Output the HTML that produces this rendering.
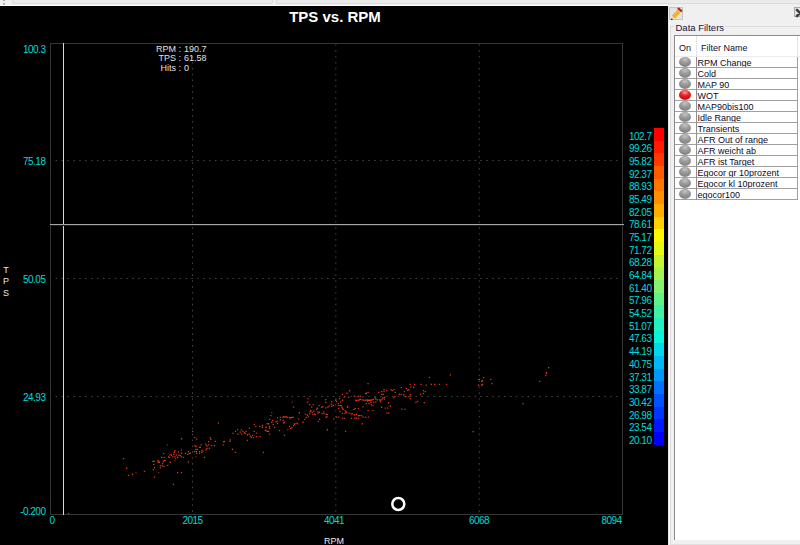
<!DOCTYPE html>
<html><head><meta charset="utf-8">
<style>
html,body{margin:0;padding:0;}
body{width:800px;height:545px;overflow:hidden;position:relative;background:#f0f0f0;font-family:"Liberation Sans",sans-serif;}
#top{position:absolute;left:0;top:0;width:800px;height:6px;background:#efefef;}
#top .ln{position:absolute;left:0;top:5px;width:668px;height:1px;background:#ffffff;}
#top .bx{position:absolute;top:-6px;height:8px;border:1px solid #dcdcdc;border-radius:2px;background:#ebebeb;}
#chart{position:absolute;left:0;top:6px;width:668px;height:539px;background:#000;}
.cy{position:absolute;font-size:10px;letter-spacing:-0.5px;line-height:12px;color:#00dada;white-space:nowrap;}
.cx{position:absolute;width:60px;text-align:center;font-size:10px;letter-spacing:-0.5px;line-height:12px;color:#00dada;white-space:nowrap;}
.title{position:absolute;left:235px;top:7.5px;width:200px;text-align:center;font-weight:bold;font-size:15px;line-height:18px;color:#fff;}
.info{position:absolute;font-size:9px;line-height:9.4px;color:#e0e0e0;white-space:nowrap;}
.axl{position:absolute;font-size:9px;color:#e8e8e8;white-space:nowrap;line-height:11px;}
#panel{position:absolute;left:668px;top:6px;width:132px;height:539px;background:#f0f0f0;}
.pencil{position:absolute;left:669px;top:7px;width:14px;height:13px;border:1px solid #c4c4c4;background:#e2e2e2;box-sizing:border-box;}
.closeb{position:absolute;left:794px;top:7px;width:12px;height:10px;border:1px solid #a8a8a8;background:#e8e8e8;box-sizing:border-box;}
.gb{position:absolute;left:670px;top:26px;width:140px;height:517px;border-left:1px solid #dcdcdc;border-top:1px solid #dcdcdc;border-bottom:1px solid #e0e0e0;}
.hl{position:absolute;left:668px;top:6px;width:1px;height:539px;background:#e8e8e8;}
.hl2{position:absolute;left:669px;top:20px;width:1px;height:525px;background:#fafafa;}
.gbt{position:absolute;left:674px;top:20.5px;padding:0 1px 0 1.5px;background:#f0f0f0;font-size:9.5px;line-height:13px;color:#141440;white-space:nowrap;}
#tbl{position:absolute;left:674px;top:35px;width:126px;height:505px;background:#fff;border-left:1px solid #8a8a8a;border-top:1px solid #8a8a8a;box-sizing:border-box;}
.hdr{position:absolute;font-size:9px;line-height:12px;color:#101030;white-space:nowrap;}
.hdiv{position:absolute;left:696px;top:36px;width:1px;height:20px;background:#e4e4e4;}
.rl{position:absolute;left:675px;width:123px;height:1px;background:#a0a0a0;}
.rt{position:absolute;left:697.5px;font-size:9px;line-height:11px;color:#0a0a28;white-space:nowrap;}
.ball{position:absolute;left:679px;width:12px;height:10px;border-radius:6px/5px;background:radial-gradient(ellipse 70% 60% at 50% 25%,#c4c4c4 0%,#9a9a9a 55%,#888 100%);}
.ball.red{background:radial-gradient(ellipse 70% 60% at 50% 25%,#ff9a9a 0%,#e62020 55%,#d01010 100%);}
.vdiv{position:absolute;left:696px;top:57px;width:1px;height:143px;background:#909090;}
.rdiv{position:absolute;left:797px;top:57px;width:1px;height:143px;background:#a0a0a0;}
.hbl{position:absolute;left:675px;top:56px;width:125px;height:1px;background:#ececec;}
</style></head><body>
<div id="top"><div style="position:absolute;left:3px;top:0;width:2px;height:1px;background:#a8a8a8"></div><div style="position:absolute;left:3px;top:3px;width:2px;height:2px;background:#b0b0b0"></div><div class="bx" style="left:12px;width:259px"></div><div class="bx" style="left:276px;width:540px"></div><div class="ln"></div></div>
<div id="chart"></div>
<svg width="800" height="545" viewBox="0 0 800 545" style="position:absolute;left:0;top:0">
<g shape-rendering="crispEdges" fill="#363636">
<rect x="50" y="43" width="573" height="1"/><rect x="50" y="514" width="573" height="1"/><rect x="50" y="43" width="1" height="472"/><rect x="622" y="43" width="1" height="472"/>
</g>
<path d="M192.00 44.20h1v1.6h-1zM192.00 50.10h1v1.6h-1zM192.00 56.00h1v1.6h-1zM192.00 61.90h1v1.6h-1zM192.00 67.80h1v1.6h-1zM192.00 73.70h1v1.6h-1zM192.00 79.60h1v1.6h-1zM192.00 85.50h1v1.6h-1zM192.00 91.40h1v1.6h-1zM192.00 97.30h1v1.6h-1zM192.00 103.20h1v1.6h-1zM192.00 109.10h1v1.6h-1zM192.00 115.00h1v1.6h-1zM192.00 120.90h1v1.6h-1zM192.00 126.80h1v1.6h-1zM192.00 132.70h1v1.6h-1zM192.00 138.60h1v1.6h-1zM192.00 144.50h1v1.6h-1zM192.00 150.40h1v1.6h-1zM192.00 156.30h1v1.6h-1zM192.00 162.20h1v1.6h-1zM192.00 168.10h1v1.6h-1zM192.00 174.00h1v1.6h-1zM192.00 179.90h1v1.6h-1zM192.00 185.80h1v1.6h-1zM192.00 191.70h1v1.6h-1zM192.00 197.60h1v1.6h-1zM192.00 203.50h1v1.6h-1zM192.00 209.40h1v1.6h-1zM192.00 215.30h1v1.6h-1zM192.00 221.20h1v1.6h-1zM192.00 227.10h1v1.6h-1zM192.00 233.00h1v1.6h-1zM192.00 238.90h1v1.6h-1zM192.00 244.80h1v1.6h-1zM192.00 250.70h1v1.6h-1zM192.00 256.60h1v1.6h-1zM192.00 262.50h1v1.6h-1zM192.00 268.40h1v1.6h-1zM192.00 274.30h1v1.6h-1zM192.00 280.20h1v1.6h-1zM192.00 286.10h1v1.6h-1zM192.00 292.00h1v1.6h-1zM192.00 297.90h1v1.6h-1zM192.00 303.80h1v1.6h-1zM192.00 309.70h1v1.6h-1zM192.00 315.60h1v1.6h-1zM192.00 321.50h1v1.6h-1zM192.00 327.40h1v1.6h-1zM192.00 333.30h1v1.6h-1zM192.00 339.20h1v1.6h-1zM192.00 345.10h1v1.6h-1zM192.00 351.00h1v1.6h-1zM192.00 356.90h1v1.6h-1zM192.00 362.80h1v1.6h-1zM192.00 368.70h1v1.6h-1zM192.00 374.60h1v1.6h-1zM192.00 380.50h1v1.6h-1zM192.00 386.40h1v1.6h-1zM192.00 392.30h1v1.6h-1zM192.00 398.20h1v1.6h-1zM192.00 404.10h1v1.6h-1zM192.00 410.00h1v1.6h-1zM192.00 415.90h1v1.6h-1zM192.00 421.80h1v1.6h-1zM192.00 427.70h1v1.6h-1zM192.00 433.60h1v1.6h-1zM192.00 439.50h1v1.6h-1zM192.00 445.40h1v1.6h-1zM192.00 451.30h1v1.6h-1zM192.00 457.20h1v1.6h-1zM192.00 463.10h1v1.6h-1zM192.00 469.00h1v1.6h-1zM192.00 474.90h1v1.6h-1zM192.00 480.80h1v1.6h-1zM192.00 486.70h1v1.6h-1zM192.00 492.60h1v1.6h-1zM192.00 498.50h1v1.6h-1zM192.00 504.40h1v1.6h-1zM192.00 510.30h1v1.6h-1zM335.30 44.20h1v1.6h-1zM335.30 50.10h1v1.6h-1zM335.30 56.00h1v1.6h-1zM335.30 61.90h1v1.6h-1zM335.30 67.80h1v1.6h-1zM335.30 73.70h1v1.6h-1zM335.30 79.60h1v1.6h-1zM335.30 85.50h1v1.6h-1zM335.30 91.40h1v1.6h-1zM335.30 97.30h1v1.6h-1zM335.30 103.20h1v1.6h-1zM335.30 109.10h1v1.6h-1zM335.30 115.00h1v1.6h-1zM335.30 120.90h1v1.6h-1zM335.30 126.80h1v1.6h-1zM335.30 132.70h1v1.6h-1zM335.30 138.60h1v1.6h-1zM335.30 144.50h1v1.6h-1zM335.30 150.40h1v1.6h-1zM335.30 156.30h1v1.6h-1zM335.30 162.20h1v1.6h-1zM335.30 168.10h1v1.6h-1zM335.30 174.00h1v1.6h-1zM335.30 179.90h1v1.6h-1zM335.30 185.80h1v1.6h-1zM335.30 191.70h1v1.6h-1zM335.30 197.60h1v1.6h-1zM335.30 203.50h1v1.6h-1zM335.30 209.40h1v1.6h-1zM335.30 215.30h1v1.6h-1zM335.30 221.20h1v1.6h-1zM335.30 227.10h1v1.6h-1zM335.30 233.00h1v1.6h-1zM335.30 238.90h1v1.6h-1zM335.30 244.80h1v1.6h-1zM335.30 250.70h1v1.6h-1zM335.30 256.60h1v1.6h-1zM335.30 262.50h1v1.6h-1zM335.30 268.40h1v1.6h-1zM335.30 274.30h1v1.6h-1zM335.30 280.20h1v1.6h-1zM335.30 286.10h1v1.6h-1zM335.30 292.00h1v1.6h-1zM335.30 297.90h1v1.6h-1zM335.30 303.80h1v1.6h-1zM335.30 309.70h1v1.6h-1zM335.30 315.60h1v1.6h-1zM335.30 321.50h1v1.6h-1zM335.30 327.40h1v1.6h-1zM335.30 333.30h1v1.6h-1zM335.30 339.20h1v1.6h-1zM335.30 345.10h1v1.6h-1zM335.30 351.00h1v1.6h-1zM335.30 356.90h1v1.6h-1zM335.30 362.80h1v1.6h-1zM335.30 368.70h1v1.6h-1zM335.30 374.60h1v1.6h-1zM335.30 380.50h1v1.6h-1zM335.30 386.40h1v1.6h-1zM335.30 392.30h1v1.6h-1zM335.30 398.20h1v1.6h-1zM335.30 404.10h1v1.6h-1zM335.30 410.00h1v1.6h-1zM335.30 415.90h1v1.6h-1zM335.30 421.80h1v1.6h-1zM335.30 427.70h1v1.6h-1zM335.30 433.60h1v1.6h-1zM335.30 439.50h1v1.6h-1zM335.30 445.40h1v1.6h-1zM335.30 451.30h1v1.6h-1zM335.30 457.20h1v1.6h-1zM335.30 463.10h1v1.6h-1zM335.30 469.00h1v1.6h-1zM335.30 474.90h1v1.6h-1zM335.30 480.80h1v1.6h-1zM335.30 486.70h1v1.6h-1zM335.30 492.60h1v1.6h-1zM335.30 498.50h1v1.6h-1zM335.30 504.40h1v1.6h-1zM335.30 510.30h1v1.6h-1zM478.80 44.20h1v1.6h-1zM478.80 50.10h1v1.6h-1zM478.80 56.00h1v1.6h-1zM478.80 61.90h1v1.6h-1zM478.80 67.80h1v1.6h-1zM478.80 73.70h1v1.6h-1zM478.80 79.60h1v1.6h-1zM478.80 85.50h1v1.6h-1zM478.80 91.40h1v1.6h-1zM478.80 97.30h1v1.6h-1zM478.80 103.20h1v1.6h-1zM478.80 109.10h1v1.6h-1zM478.80 115.00h1v1.6h-1zM478.80 120.90h1v1.6h-1zM478.80 126.80h1v1.6h-1zM478.80 132.70h1v1.6h-1zM478.80 138.60h1v1.6h-1zM478.80 144.50h1v1.6h-1zM478.80 150.40h1v1.6h-1zM478.80 156.30h1v1.6h-1zM478.80 162.20h1v1.6h-1zM478.80 168.10h1v1.6h-1zM478.80 174.00h1v1.6h-1zM478.80 179.90h1v1.6h-1zM478.80 185.80h1v1.6h-1zM478.80 191.70h1v1.6h-1zM478.80 197.60h1v1.6h-1zM478.80 203.50h1v1.6h-1zM478.80 209.40h1v1.6h-1zM478.80 215.30h1v1.6h-1zM478.80 221.20h1v1.6h-1zM478.80 227.10h1v1.6h-1zM478.80 233.00h1v1.6h-1zM478.80 238.90h1v1.6h-1zM478.80 244.80h1v1.6h-1zM478.80 250.70h1v1.6h-1zM478.80 256.60h1v1.6h-1zM478.80 262.50h1v1.6h-1zM478.80 268.40h1v1.6h-1zM478.80 274.30h1v1.6h-1zM478.80 280.20h1v1.6h-1zM478.80 286.10h1v1.6h-1zM478.80 292.00h1v1.6h-1zM478.80 297.90h1v1.6h-1zM478.80 303.80h1v1.6h-1zM478.80 309.70h1v1.6h-1zM478.80 315.60h1v1.6h-1zM478.80 321.50h1v1.6h-1zM478.80 327.40h1v1.6h-1zM478.80 333.30h1v1.6h-1zM478.80 339.20h1v1.6h-1zM478.80 345.10h1v1.6h-1zM478.80 351.00h1v1.6h-1zM478.80 356.90h1v1.6h-1zM478.80 362.80h1v1.6h-1zM478.80 368.70h1v1.6h-1zM478.80 374.60h1v1.6h-1zM478.80 380.50h1v1.6h-1zM478.80 386.40h1v1.6h-1zM478.80 392.30h1v1.6h-1zM478.80 398.20h1v1.6h-1zM478.80 404.10h1v1.6h-1zM478.80 410.00h1v1.6h-1zM478.80 415.90h1v1.6h-1zM478.80 421.80h1v1.6h-1zM478.80 427.70h1v1.6h-1zM478.80 433.60h1v1.6h-1zM478.80 439.50h1v1.6h-1zM478.80 445.40h1v1.6h-1zM478.80 451.30h1v1.6h-1zM478.80 457.20h1v1.6h-1zM478.80 463.10h1v1.6h-1zM478.80 469.00h1v1.6h-1zM478.80 474.90h1v1.6h-1zM478.80 480.80h1v1.6h-1zM478.80 486.70h1v1.6h-1zM478.80 492.60h1v1.6h-1zM478.80 498.50h1v1.6h-1zM478.80 504.40h1v1.6h-1zM478.80 510.30h1v1.6h-1zM55.60 160h1.6v1h-1.6zM61.50 160h1.6v1h-1.6zM67.40 160h1.6v1h-1.6zM73.30 160h1.6v1h-1.6zM79.20 160h1.6v1h-1.6zM85.10 160h1.6v1h-1.6zM91.00 160h1.6v1h-1.6zM96.90 160h1.6v1h-1.6zM102.80 160h1.6v1h-1.6zM108.70 160h1.6v1h-1.6zM114.60 160h1.6v1h-1.6zM120.50 160h1.6v1h-1.6zM126.40 160h1.6v1h-1.6zM132.30 160h1.6v1h-1.6zM138.20 160h1.6v1h-1.6zM144.10 160h1.6v1h-1.6zM150.00 160h1.6v1h-1.6zM155.90 160h1.6v1h-1.6zM161.80 160h1.6v1h-1.6zM167.70 160h1.6v1h-1.6zM173.60 160h1.6v1h-1.6zM179.50 160h1.6v1h-1.6zM185.40 160h1.6v1h-1.6zM191.30 160h1.6v1h-1.6zM197.20 160h1.6v1h-1.6zM203.10 160h1.6v1h-1.6zM209.00 160h1.6v1h-1.6zM214.90 160h1.6v1h-1.6zM220.80 160h1.6v1h-1.6zM226.70 160h1.6v1h-1.6zM232.60 160h1.6v1h-1.6zM238.50 160h1.6v1h-1.6zM244.40 160h1.6v1h-1.6zM250.30 160h1.6v1h-1.6zM256.20 160h1.6v1h-1.6zM262.10 160h1.6v1h-1.6zM268.00 160h1.6v1h-1.6zM273.90 160h1.6v1h-1.6zM279.80 160h1.6v1h-1.6zM285.70 160h1.6v1h-1.6zM291.60 160h1.6v1h-1.6zM297.50 160h1.6v1h-1.6zM303.40 160h1.6v1h-1.6zM309.30 160h1.6v1h-1.6zM315.20 160h1.6v1h-1.6zM321.10 160h1.6v1h-1.6zM327.00 160h1.6v1h-1.6zM332.90 160h1.6v1h-1.6zM338.80 160h1.6v1h-1.6zM344.70 160h1.6v1h-1.6zM350.60 160h1.6v1h-1.6zM356.50 160h1.6v1h-1.6zM362.40 160h1.6v1h-1.6zM368.30 160h1.6v1h-1.6zM374.20 160h1.6v1h-1.6zM380.10 160h1.6v1h-1.6zM386.00 160h1.6v1h-1.6zM391.90 160h1.6v1h-1.6zM397.80 160h1.6v1h-1.6zM403.70 160h1.6v1h-1.6zM409.60 160h1.6v1h-1.6zM415.50 160h1.6v1h-1.6zM421.40 160h1.6v1h-1.6zM427.30 160h1.6v1h-1.6zM433.20 160h1.6v1h-1.6zM439.10 160h1.6v1h-1.6zM445.00 160h1.6v1h-1.6zM450.90 160h1.6v1h-1.6zM456.80 160h1.6v1h-1.6zM462.70 160h1.6v1h-1.6zM468.60 160h1.6v1h-1.6zM474.50 160h1.6v1h-1.6zM480.40 160h1.6v1h-1.6zM486.30 160h1.6v1h-1.6zM492.20 160h1.6v1h-1.6zM498.10 160h1.6v1h-1.6zM504.00 160h1.6v1h-1.6zM509.90 160h1.6v1h-1.6zM515.80 160h1.6v1h-1.6zM521.70 160h1.6v1h-1.6zM527.60 160h1.6v1h-1.6zM533.50 160h1.6v1h-1.6zM539.40 160h1.6v1h-1.6zM545.30 160h1.6v1h-1.6zM551.20 160h1.6v1h-1.6zM557.10 160h1.6v1h-1.6zM563.00 160h1.6v1h-1.6zM568.90 160h1.6v1h-1.6zM574.80 160h1.6v1h-1.6zM580.70 160h1.6v1h-1.6zM586.60 160h1.6v1h-1.6zM592.50 160h1.6v1h-1.6zM598.40 160h1.6v1h-1.6zM604.30 160h1.6v1h-1.6zM610.20 160h1.6v1h-1.6zM616.10 160h1.6v1h-1.6zM55.60 278h1.6v1h-1.6zM61.50 278h1.6v1h-1.6zM67.40 278h1.6v1h-1.6zM73.30 278h1.6v1h-1.6zM79.20 278h1.6v1h-1.6zM85.10 278h1.6v1h-1.6zM91.00 278h1.6v1h-1.6zM96.90 278h1.6v1h-1.6zM102.80 278h1.6v1h-1.6zM108.70 278h1.6v1h-1.6zM114.60 278h1.6v1h-1.6zM120.50 278h1.6v1h-1.6zM126.40 278h1.6v1h-1.6zM132.30 278h1.6v1h-1.6zM138.20 278h1.6v1h-1.6zM144.10 278h1.6v1h-1.6zM150.00 278h1.6v1h-1.6zM155.90 278h1.6v1h-1.6zM161.80 278h1.6v1h-1.6zM167.70 278h1.6v1h-1.6zM173.60 278h1.6v1h-1.6zM179.50 278h1.6v1h-1.6zM185.40 278h1.6v1h-1.6zM191.30 278h1.6v1h-1.6zM197.20 278h1.6v1h-1.6zM203.10 278h1.6v1h-1.6zM209.00 278h1.6v1h-1.6zM214.90 278h1.6v1h-1.6zM220.80 278h1.6v1h-1.6zM226.70 278h1.6v1h-1.6zM232.60 278h1.6v1h-1.6zM238.50 278h1.6v1h-1.6zM244.40 278h1.6v1h-1.6zM250.30 278h1.6v1h-1.6zM256.20 278h1.6v1h-1.6zM262.10 278h1.6v1h-1.6zM268.00 278h1.6v1h-1.6zM273.90 278h1.6v1h-1.6zM279.80 278h1.6v1h-1.6zM285.70 278h1.6v1h-1.6zM291.60 278h1.6v1h-1.6zM297.50 278h1.6v1h-1.6zM303.40 278h1.6v1h-1.6zM309.30 278h1.6v1h-1.6zM315.20 278h1.6v1h-1.6zM321.10 278h1.6v1h-1.6zM327.00 278h1.6v1h-1.6zM332.90 278h1.6v1h-1.6zM338.80 278h1.6v1h-1.6zM344.70 278h1.6v1h-1.6zM350.60 278h1.6v1h-1.6zM356.50 278h1.6v1h-1.6zM362.40 278h1.6v1h-1.6zM368.30 278h1.6v1h-1.6zM374.20 278h1.6v1h-1.6zM380.10 278h1.6v1h-1.6zM386.00 278h1.6v1h-1.6zM391.90 278h1.6v1h-1.6zM397.80 278h1.6v1h-1.6zM403.70 278h1.6v1h-1.6zM409.60 278h1.6v1h-1.6zM415.50 278h1.6v1h-1.6zM421.40 278h1.6v1h-1.6zM427.30 278h1.6v1h-1.6zM433.20 278h1.6v1h-1.6zM439.10 278h1.6v1h-1.6zM445.00 278h1.6v1h-1.6zM450.90 278h1.6v1h-1.6zM456.80 278h1.6v1h-1.6zM462.70 278h1.6v1h-1.6zM468.60 278h1.6v1h-1.6zM474.50 278h1.6v1h-1.6zM480.40 278h1.6v1h-1.6zM486.30 278h1.6v1h-1.6zM492.20 278h1.6v1h-1.6zM498.10 278h1.6v1h-1.6zM504.00 278h1.6v1h-1.6zM509.90 278h1.6v1h-1.6zM515.80 278h1.6v1h-1.6zM521.70 278h1.6v1h-1.6zM527.60 278h1.6v1h-1.6zM533.50 278h1.6v1h-1.6zM539.40 278h1.6v1h-1.6zM545.30 278h1.6v1h-1.6zM551.20 278h1.6v1h-1.6zM557.10 278h1.6v1h-1.6zM563.00 278h1.6v1h-1.6zM568.90 278h1.6v1h-1.6zM574.80 278h1.6v1h-1.6zM580.70 278h1.6v1h-1.6zM586.60 278h1.6v1h-1.6zM592.50 278h1.6v1h-1.6zM598.40 278h1.6v1h-1.6zM604.30 278h1.6v1h-1.6zM610.20 278h1.6v1h-1.6zM616.10 278h1.6v1h-1.6zM55.60 396h1.6v1h-1.6zM61.50 396h1.6v1h-1.6zM67.40 396h1.6v1h-1.6zM73.30 396h1.6v1h-1.6zM79.20 396h1.6v1h-1.6zM85.10 396h1.6v1h-1.6zM91.00 396h1.6v1h-1.6zM96.90 396h1.6v1h-1.6zM102.80 396h1.6v1h-1.6zM108.70 396h1.6v1h-1.6zM114.60 396h1.6v1h-1.6zM120.50 396h1.6v1h-1.6zM126.40 396h1.6v1h-1.6zM132.30 396h1.6v1h-1.6zM138.20 396h1.6v1h-1.6zM144.10 396h1.6v1h-1.6zM150.00 396h1.6v1h-1.6zM155.90 396h1.6v1h-1.6zM161.80 396h1.6v1h-1.6zM167.70 396h1.6v1h-1.6zM173.60 396h1.6v1h-1.6zM179.50 396h1.6v1h-1.6zM185.40 396h1.6v1h-1.6zM191.30 396h1.6v1h-1.6zM197.20 396h1.6v1h-1.6zM203.10 396h1.6v1h-1.6zM209.00 396h1.6v1h-1.6zM214.90 396h1.6v1h-1.6zM220.80 396h1.6v1h-1.6zM226.70 396h1.6v1h-1.6zM232.60 396h1.6v1h-1.6zM238.50 396h1.6v1h-1.6zM244.40 396h1.6v1h-1.6zM250.30 396h1.6v1h-1.6zM256.20 396h1.6v1h-1.6zM262.10 396h1.6v1h-1.6zM268.00 396h1.6v1h-1.6zM273.90 396h1.6v1h-1.6zM279.80 396h1.6v1h-1.6zM285.70 396h1.6v1h-1.6zM291.60 396h1.6v1h-1.6zM297.50 396h1.6v1h-1.6zM303.40 396h1.6v1h-1.6zM309.30 396h1.6v1h-1.6zM315.20 396h1.6v1h-1.6zM321.10 396h1.6v1h-1.6zM327.00 396h1.6v1h-1.6zM332.90 396h1.6v1h-1.6zM338.80 396h1.6v1h-1.6zM344.70 396h1.6v1h-1.6zM350.60 396h1.6v1h-1.6zM356.50 396h1.6v1h-1.6zM362.40 396h1.6v1h-1.6zM368.30 396h1.6v1h-1.6zM374.20 396h1.6v1h-1.6zM380.10 396h1.6v1h-1.6zM386.00 396h1.6v1h-1.6zM391.90 396h1.6v1h-1.6zM397.80 396h1.6v1h-1.6zM403.70 396h1.6v1h-1.6zM409.60 396h1.6v1h-1.6zM415.50 396h1.6v1h-1.6zM421.40 396h1.6v1h-1.6zM427.30 396h1.6v1h-1.6zM433.20 396h1.6v1h-1.6zM439.10 396h1.6v1h-1.6zM445.00 396h1.6v1h-1.6zM450.90 396h1.6v1h-1.6zM456.80 396h1.6v1h-1.6zM462.70 396h1.6v1h-1.6zM468.60 396h1.6v1h-1.6zM474.50 396h1.6v1h-1.6zM480.40 396h1.6v1h-1.6zM486.30 396h1.6v1h-1.6zM492.20 396h1.6v1h-1.6zM498.10 396h1.6v1h-1.6zM504.00 396h1.6v1h-1.6zM509.90 396h1.6v1h-1.6zM515.80 396h1.6v1h-1.6zM521.70 396h1.6v1h-1.6zM527.60 396h1.6v1h-1.6zM533.50 396h1.6v1h-1.6zM539.40 396h1.6v1h-1.6zM545.30 396h1.6v1h-1.6zM551.20 396h1.6v1h-1.6zM557.10 396h1.6v1h-1.6zM563.00 396h1.6v1h-1.6zM568.90 396h1.6v1h-1.6zM574.80 396h1.6v1h-1.6zM580.70 396h1.6v1h-1.6zM586.60 396h1.6v1h-1.6zM592.50 396h1.6v1h-1.6zM598.40 396h1.6v1h-1.6zM604.30 396h1.6v1h-1.6zM610.20 396h1.6v1h-1.6zM616.10 396h1.6v1h-1.6z" fill="#404040"/>
<path d="M122.8 457.9h1.3v1.3h-1.3zM126.0 467.6h1.3v1.3h-1.3zM127.8 474.8h1.3v1.3h-1.3zM131.9 473.6h1.3v1.3h-1.3zM143.8 470.7h1.3v1.3h-1.3zM172.8 483.8h1.3v1.3h-1.3zM67.9 512.9h1.3v1.3h-1.3zM191.9 430.8h1.3v1.3h-1.3zM209.6 436.9h1.3v1.3h-1.3zM210.2 438.6h1.3v1.3h-1.3zM210.9 445.0h1.3v1.3h-1.3zM213.8 445.0h1.3v1.3h-1.3zM214.7 440.7h1.3v1.3h-1.3zM217.7 422.5h1.3v1.3h-1.3zM222.4 444.3h1.3v1.3h-1.3zM223.0 441.5h1.3v1.3h-1.3zM223.7 440.7h1.3v1.3h-1.3zM229.2 440.7h1.3v1.3h-1.3zM229.7 439.2h1.3v1.3h-1.3zM231.8 448.6h1.3v1.3h-1.3zM232.4 432.8h1.3v1.3h-1.3zM234.9 430.8h1.3v1.3h-1.3zM234.9 451.8h1.3v1.3h-1.3zM236.9 428.9h1.3v1.3h-1.3zM237.2 433.4h1.3v1.3h-1.3zM239.7 431.5h1.3v1.3h-1.3zM240.8 429.2h1.3v1.3h-1.3zM241.0 433.4h1.3v1.3h-1.3zM242.3 430.8h1.3v1.3h-1.3zM243.6 432.1h1.3v1.3h-1.3zM244.9 432.8h1.3v1.3h-1.3zM245.5 430.8h1.3v1.3h-1.3zM246.8 434.1h1.3v1.3h-1.3zM246.8 439.8h1.3v1.3h-1.3zM248.7 427.4h1.3v1.3h-1.3zM248.7 433.4h1.3v1.3h-1.3zM249.7 435.4h1.3v1.3h-1.3zM250.6 436.6h1.3v1.3h-1.3zM251.9 434.7h1.3v1.3h-1.3zM252.8 436.9h1.3v1.3h-1.3zM253.6 430.8h1.3v1.3h-1.3zM253.6 423.8h1.3v1.3h-1.3zM255.1 425.7h1.3v1.3h-1.3zM255.8 432.5h1.3v1.3h-1.3zM255.8 436.0h1.3v1.3h-1.3zM259.0 425.7h1.3v1.3h-1.3zM259.6 436.0h1.3v1.3h-1.3zM261.8 424.8h1.3v1.3h-1.3zM261.8 426.6h1.3v1.3h-1.3zM262.8 451.8h1.3v1.3h-1.3zM264.8 429.6h1.3v1.3h-1.3zM265.9 430.4h1.3v1.3h-1.3zM266.7 430.8h1.3v1.3h-1.3zM268.0 430.8h1.3v1.3h-1.3zM265.4 426.6h1.3v1.3h-1.3zM266.4 423.1h1.3v1.3h-1.3zM268.0 423.1h1.3v1.3h-1.3zM268.9 418.7h1.3v1.3h-1.3zM268.9 425.7h1.3v1.3h-1.3zM268.9 427.6h1.3v1.3h-1.3zM268.9 433.4h1.3v1.3h-1.3zM344.9 430.8h1.3v1.3h-1.3zM389.7 405.6h1.3v1.3h-1.3zM390.3 388.9h1.3v1.3h-1.3zM391.6 390.0h1.3v1.3h-1.3zM392.9 397.3h1.3v1.3h-1.3zM393.5 388.9h1.3v1.3h-1.3zM394.2 396.0h1.3v1.3h-1.3zM394.8 391.7h1.3v1.3h-1.3zM398.7 393.8h1.3v1.3h-1.3zM400.6 393.8h1.3v1.3h-1.3zM400.6 387.0h1.3v1.3h-1.3zM401.0 408.4h1.3v1.3h-1.3zM403.1 394.1h1.3v1.3h-1.3zM403.8 390.9h1.3v1.3h-1.3zM404.4 408.8h1.3v1.3h-1.3zM405.1 396.0h1.3v1.3h-1.3zM405.7 387.9h1.3v1.3h-1.3zM407.0 389.6h1.3v1.3h-1.3zM408.3 388.9h1.3v1.3h-1.3zM408.3 396.0h1.3v1.3h-1.3zM409.6 383.8h1.3v1.3h-1.3zM409.6 394.1h1.3v1.3h-1.3zM409.6 397.9h1.3v1.3h-1.3zM410.2 386.4h1.3v1.3h-1.3zM413.0 386.6h1.3v1.3h-1.3zM413.8 383.8h1.3v1.3h-1.3zM415.3 401.8h1.3v1.3h-1.3zM416.9 400.7h1.3v1.3h-1.3zM419.8 393.8h1.3v1.3h-1.3zM420.5 383.8h1.3v1.3h-1.3zM422.8 390.0h1.3v1.3h-1.3zM422.8 392.8h1.3v1.3h-1.3zM423.7 402.0h1.3v1.3h-1.3zM424.6 390.9h1.3v1.3h-1.3zM425.6 384.4h1.3v1.3h-1.3zM428.8 376.7h1.3v1.3h-1.3zM430.7 383.8h1.3v1.3h-1.3zM434.0 383.8h1.3v1.3h-1.3zM438.8 383.8h1.3v1.3h-1.3zM445.9 383.8h1.3v1.3h-1.3zM449.7 374.2h1.3v1.3h-1.3zM472.5 431.0h1.3v1.3h-1.3zM478.2 378.9h1.3v1.3h-1.3zM478.0 384.6h1.3v1.3h-1.3zM478.7 378.8h1.3v1.3h-1.3zM481.0 380.7h1.3v1.3h-1.3zM481.9 380.1h1.3v1.3h-1.3zM482.9 376.9h1.3v1.3h-1.3zM481.0 384.6h1.3v1.3h-1.3zM481.9 383.7h1.3v1.3h-1.3zM490.2 378.8h1.3v1.3h-1.3zM491.2 382.9h1.3v1.3h-1.3zM522.3 402.9h1.3v1.3h-1.3zM539.0 380.7h1.3v1.3h-1.3zM545.2 374.9h1.3v1.3h-1.3zM545.8 371.7h1.3v1.3h-1.3zM545.8 373.0h1.3v1.3h-1.3zM548.0 366.9h1.3v1.3h-1.3zM331.1 401.3h1.3v1.3h-1.3zM330.6 403.7h1.3v1.3h-1.3zM332.7 404.8h1.3v1.3h-1.3zM331.1 405.8h1.3v1.3h-1.3zM335.2 399.6h1.3v1.3h-1.3zM336.0 400.9h1.3v1.3h-1.3zM337.7 402.9h1.3v1.3h-1.3zM338.1 405.0h1.3v1.3h-1.3zM338.1 407.9h1.3v1.3h-1.3zM338.9 398.0h1.3v1.3h-1.3zM339.7 405.0h1.3v1.3h-1.3zM340.5 405.0h1.3v1.3h-1.3zM341.4 406.6h1.3v1.3h-1.3zM341.8 407.9h1.3v1.3h-1.3zM342.6 408.7h1.3v1.3h-1.3zM344.7 410.3h1.3v1.3h-1.3zM345.5 411.2h1.3v1.3h-1.3zM345.9 412.0h1.3v1.3h-1.3zM348.4 412.4h1.3v1.3h-1.3zM350.4 413.2h1.3v1.3h-1.3zM351.7 413.2h1.3v1.3h-1.3zM353.7 414.1h1.3v1.3h-1.3zM355.8 413.6h1.3v1.3h-1.3zM357.9 414.9h1.3v1.3h-1.3zM359.1 414.9h1.3v1.3h-1.3zM360.8 414.9h1.3v1.3h-1.3zM354.2 417.4h1.3v1.3h-1.3zM355.8 417.4h1.3v1.3h-1.3zM357.9 417.8h1.3v1.3h-1.3zM350.9 417.8h1.3v1.3h-1.3zM341.8 412.8h1.3v1.3h-1.3zM344.3 412.8h1.3v1.3h-1.3zM341.8 417.4h1.3v1.3h-1.3zM343.8 417.4h1.3v1.3h-1.3zM336.0 416.5h1.3v1.3h-1.3zM338.1 416.5h1.3v1.3h-1.3zM333.1 418.2h1.3v1.3h-1.3zM341.8 393.8h1.3v1.3h-1.3zM343.8 396.3h1.3v1.3h-1.3zM346.3 392.6h1.3v1.3h-1.3zM348.0 396.7h1.3v1.3h-1.3zM348.8 390.1h1.3v1.3h-1.3zM346.7 405.8h1.3v1.3h-1.3zM347.1 406.6h1.3v1.3h-1.3zM353.3 408.7h1.3v1.3h-1.3zM354.6 407.9h1.3v1.3h-1.3zM357.9 407.9h1.3v1.3h-1.3zM353.7 395.5h1.3v1.3h-1.3zM355.0 399.6h1.3v1.3h-1.3zM355.8 400.0h1.3v1.3h-1.3zM357.5 399.6h1.3v1.3h-1.3zM358.7 399.2h1.3v1.3h-1.3zM359.9 398.8h1.3v1.3h-1.3zM361.6 399.2h1.3v1.3h-1.3zM363.2 399.6h1.3v1.3h-1.3zM364.9 399.6h1.3v1.3h-1.3zM366.5 399.2h1.3v1.3h-1.3zM366.9 400.4h1.3v1.3h-1.3zM367.8 399.6h1.3v1.3h-1.3zM369.0 399.6h1.3v1.3h-1.3zM370.2 399.6h1.3v1.3h-1.3zM371.5 399.2h1.3v1.3h-1.3zM372.7 398.8h1.3v1.3h-1.3zM374.4 397.1h1.3v1.3h-1.3zM375.2 398.8h1.3v1.3h-1.3zM376.8 399.2h1.3v1.3h-1.3zM378.9 399.2h1.3v1.3h-1.3zM380.1 399.6h1.3v1.3h-1.3zM381.4 398.4h1.3v1.3h-1.3zM382.2 397.1h1.3v1.3h-1.3zM383.9 396.7h1.3v1.3h-1.3zM365.7 402.9h1.3v1.3h-1.3zM368.2 402.9h1.3v1.3h-1.3zM370.2 401.7h1.3v1.3h-1.3zM370.7 404.2h1.3v1.3h-1.3zM372.3 405.0h1.3v1.3h-1.3zM373.1 401.7h1.3v1.3h-1.3zM375.2 401.3h1.3v1.3h-1.3zM379.7 401.3h1.3v1.3h-1.3zM365.7 392.6h1.3v1.3h-1.3zM367.4 391.8h1.3v1.3h-1.3zM364.9 393.0h1.3v1.3h-1.3zM367.4 382.9h1.3v1.3h-1.3zM378.1 391.8h1.3v1.3h-1.3zM381.0 391.0h1.3v1.3h-1.3zM383.4 388.9h1.3v1.3h-1.3zM385.9 389.7h1.3v1.3h-1.3zM383.4 391.0h1.3v1.3h-1.3zM381.0 393.8h1.3v1.3h-1.3zM382.6 393.8h1.3v1.3h-1.3zM383.9 398.4h1.3v1.3h-1.3zM381.0 406.6h1.3v1.3h-1.3zM384.7 407.5h1.3v1.3h-1.3zM387.2 407.5h1.3v1.3h-1.3zM386.3 412.4h1.3v1.3h-1.3zM388.0 412.4h1.3v1.3h-1.3zM388.0 402.1h1.3v1.3h-1.3zM362.4 406.2h1.3v1.3h-1.3zM367.4 409.9h1.3v1.3h-1.3zM372.3 409.9h1.3v1.3h-1.3zM362.4 416.5h1.3v1.3h-1.3zM364.9 416.5h1.3v1.3h-1.3zM367.8 416.5h1.3v1.3h-1.3zM361.6 423.1h1.3v1.3h-1.3zM339.3 410.8h1.3v1.3h-1.3zM340.1 401.3h1.3v1.3h-1.3zM341.8 399.6h1.3v1.3h-1.3zM354.2 395.5h1.3v1.3h-1.3zM357.9 395.5h1.3v1.3h-1.3zM359.9 395.5h1.3v1.3h-1.3zM270.2 414.9h1.3v1.3h-1.3zM271.1 421.6h1.3v1.3h-1.3zM271.9 419.8h1.3v1.3h-1.3zM272.7 423.7h1.3v1.3h-1.3zM273.9 426.7h1.3v1.3h-1.3zM275.6 421.2h1.3v1.3h-1.3zM276.4 420.8h1.3v1.3h-1.3zM276.8 422.9h1.3v1.3h-1.3zM276.8 417.3h1.3v1.3h-1.3zM278.9 429.9h1.3v1.3h-1.3zM279.7 416.7h1.3v1.3h-1.3zM279.7 419.0h1.3v1.3h-1.3zM282.2 416.7h1.3v1.3h-1.3zM283.0 416.0h1.3v1.3h-1.3zM284.3 416.5h1.3v1.3h-1.3zM285.5 416.0h1.3v1.3h-1.3zM286.7 416.8h1.3v1.3h-1.3zM288.8 417.1h1.3v1.3h-1.3zM290.0 417.1h1.3v1.3h-1.3zM291.3 416.7h1.3v1.3h-1.3zM292.5 416.8h1.3v1.3h-1.3zM282.6 419.8h1.3v1.3h-1.3zM283.0 422.5h1.3v1.3h-1.3zM283.8 421.6h1.3v1.3h-1.3zM283.8 434.8h1.3v1.3h-1.3zM288.8 425.8h1.3v1.3h-1.3zM290.0 427.8h1.3v1.3h-1.3zM291.3 427.0h1.3v1.3h-1.3zM292.9 424.9h1.3v1.3h-1.3zM293.7 423.7h1.3v1.3h-1.3zM294.2 422.9h1.3v1.3h-1.3zM292.9 406.4h1.3v1.3h-1.3zM296.2 422.5h1.3v1.3h-1.3zM297.0 423.3h1.3v1.3h-1.3zM297.9 418.3h1.3v1.3h-1.3zM298.7 412.1h1.3v1.3h-1.3zM302.4 421.6h1.3v1.3h-1.3zM304.1 418.7h1.3v1.3h-1.3zM304.9 413.8h1.3v1.3h-1.3zM305.7 416.7h1.3v1.3h-1.3zM306.9 414.6h1.3v1.3h-1.3zM306.9 401.4h1.3v1.3h-1.3zM307.4 397.9h1.3v1.3h-1.3zM307.8 416.3h1.3v1.3h-1.3zM309.0 413.0h1.3v1.3h-1.3zM309.4 410.9h1.3v1.3h-1.3zM309.0 403.9h1.3v1.3h-1.3zM310.2 410.1h1.3v1.3h-1.3zM311.1 406.4h1.3v1.3h-1.3zM311.5 411.7h1.3v1.3h-1.3zM312.3 413.8h1.3v1.3h-1.3zM312.7 403.9h1.3v1.3h-1.3zM313.1 410.5h1.3v1.3h-1.3zM314.0 413.4h1.3v1.3h-1.3zM314.8 414.0h1.3v1.3h-1.3zM316.0 408.8h1.3v1.3h-1.3zM316.8 407.6h1.3v1.3h-1.3zM317.3 410.9h1.3v1.3h-1.3zM317.3 412.4h1.3v1.3h-1.3zM318.5 405.0h1.3v1.3h-1.3zM318.9 411.7h1.3v1.3h-1.3zM318.9 418.7h1.3v1.3h-1.3zM317.7 420.8h1.3v1.3h-1.3zM321.0 406.8h1.3v1.3h-1.3zM321.4 413.0h1.3v1.3h-1.3zM322.2 406.0h1.3v1.3h-1.3zM323.0 411.3h1.3v1.3h-1.3zM323.4 413.0h1.3v1.3h-1.3zM325.1 398.9h1.3v1.3h-1.3zM325.1 401.8h1.3v1.3h-1.3zM325.1 407.2h1.3v1.3h-1.3zM325.5 413.8h1.3v1.3h-1.3zM325.5 416.7h1.3v1.3h-1.3zM326.3 415.9h1.3v1.3h-1.3zM326.7 413.8h1.3v1.3h-1.3zM327.2 406.4h1.3v1.3h-1.3zM328.4 405.5h1.3v1.3h-1.3zM326.7 429.1h1.3v1.3h-1.3zM152.3 460.8h1.3v1.3h-1.3zM153.5 460.8h1.3v1.3h-1.3zM153.1 463.7h1.3v1.3h-1.3zM153.9 467.0h1.3v1.3h-1.3zM152.7 468.9h1.3v1.3h-1.3zM153.9 476.5h1.3v1.3h-1.3zM157.2 460.0h1.3v1.3h-1.3zM158.1 460.8h1.3v1.3h-1.3zM158.5 461.6h1.3v1.3h-1.3zM157.7 461.6h1.3v1.3h-1.3zM159.7 464.9h1.3v1.3h-1.3zM159.7 467.0h1.3v1.3h-1.3zM161.0 456.7h1.3v1.3h-1.3zM161.8 462.9h1.3v1.3h-1.3zM162.6 461.2h1.3v1.3h-1.3zM163.4 460.0h1.3v1.3h-1.3zM164.3 459.6h1.3v1.3h-1.3zM163.0 453.0h1.3v1.3h-1.3zM163.4 456.7h1.3v1.3h-1.3zM161.8 465.3h1.3v1.3h-1.3zM163.4 465.8h1.3v1.3h-1.3zM167.1 464.8h1.3v1.3h-1.3zM168.0 456.3h1.3v1.3h-1.3zM168.8 456.7h1.3v1.3h-1.3zM169.2 454.2h1.3v1.3h-1.3zM169.6 461.6h1.3v1.3h-1.3zM170.9 454.6h1.3v1.3h-1.3zM172.1 456.3h1.3v1.3h-1.3zM172.9 453.8h1.3v1.3h-1.3zM173.7 451.7h1.3v1.3h-1.3zM174.2 450.1h1.3v1.3h-1.3zM174.2 455.9h1.3v1.3h-1.3zM175.0 457.9h1.3v1.3h-1.3zM175.8 454.2h1.3v1.3h-1.3zM177.0 456.7h1.3v1.3h-1.3zM177.0 471.9h1.3v1.3h-1.3zM177.9 451.3h1.3v1.3h-1.3zM178.3 454.6h1.3v1.3h-1.3zM179.9 455.0h1.3v1.3h-1.3zM180.8 456.3h1.3v1.3h-1.3zM180.8 438.1h1.3v1.3h-1.3zM180.8 449.3h1.3v1.3h-1.3zM180.8 452.6h1.3v1.3h-1.3zM180.8 471.9h1.3v1.3h-1.3zM182.8 456.7h1.3v1.3h-1.3zM184.9 452.7h1.3v1.3h-1.3zM186.9 453.8h1.3v1.3h-1.3zM187.8 450.9h1.3v1.3h-1.3zM187.8 461.2h1.3v1.3h-1.3zM188.6 452.7h1.3v1.3h-1.3zM189.8 452.7h1.3v1.3h-1.3zM194.0 436.9h1.3v1.3h-1.3zM196.0 438.5h1.3v1.3h-1.3zM194.4 445.1h1.3v1.3h-1.3zM195.6 446.0h1.3v1.3h-1.3zM195.2 448.8h1.3v1.3h-1.3zM196.8 448.8h1.3v1.3h-1.3zM194.0 450.9h1.3v1.3h-1.3zM195.6 450.9h1.3v1.3h-1.3zM196.0 452.7h1.3v1.3h-1.3zM198.9 446.8h1.3v1.3h-1.3zM199.7 446.8h1.3v1.3h-1.3zM200.6 444.3h1.3v1.3h-1.3zM198.9 450.9h1.3v1.3h-1.3zM198.9 452.7h1.3v1.3h-1.3zM201.4 449.7h1.3v1.3h-1.3zM201.0 451.7h1.3v1.3h-1.3zM202.2 450.5h1.3v1.3h-1.3zM203.9 456.7h1.3v1.3h-1.3zM205.1 443.5h1.3v1.3h-1.3zM206.3 445.1h1.3v1.3h-1.3zM208.0 441.0h1.3v1.3h-1.3zM208.0 444.3h1.3v1.3h-1.3zM206.3 448.0h1.3v1.3h-1.3zM205.5 449.3h1.3v1.3h-1.3zM208.8 447.6h1.3v1.3h-1.3z" fill="#dc340e"/>
<path d="M135.4 471.9h1.3v1.3h-1.3zM271.1 412.1h1.3v1.3h-1.3zM287.1 429.1h1.3v1.3h-1.3zM291.3 401.4h1.3v1.3h-1.3zM158.1 471.9h1.3v1.3h-1.3zM166.7 444.3h1.3v1.3h-1.3zM174.2 460.0h1.3v1.3h-1.3zM195.2 456.3h1.3v1.3h-1.3z" fill="#7a220c"/>
<g shape-rendering="crispEdges">
<line x1="63.5" y1="43" x2="63.5" y2="515" stroke="#d8d8d8" stroke-width="1"/>
<line x1="50" y1="224.5" x2="624" y2="224.5" stroke="#a6a6a6" stroke-width="1"/><line x1="50" y1="225.5" x2="624" y2="225.5" stroke="#1c1c1c" stroke-width="1"/>
</g>
<circle cx="398.3" cy="504" r="6" fill="none" stroke="#ffffff" stroke-width="2.5"/>
<g shape-rendering="crispEdges">
<rect x="654" y="128.00" width="10.3" height="12.97" fill="#ff0000"/>
<rect x="654" y="140.67" width="10.3" height="12.97" fill="#ff1a00"/>
<rect x="654" y="153.34" width="10.3" height="12.97" fill="#ff3a00"/>
<rect x="654" y="166.00" width="10.3" height="12.97" fill="#ff5c00"/>
<rect x="654" y="178.67" width="10.3" height="12.97" fill="#ff7600"/>
<rect x="654" y="191.34" width="10.3" height="12.97" fill="#ff8e00"/>
<rect x="654" y="204.01" width="10.3" height="12.97" fill="#ffae00"/>
<rect x="654" y="216.68" width="10.3" height="12.97" fill="#ffd000"/>
<rect x="654" y="229.34" width="10.3" height="12.97" fill="#fff800"/>
<rect x="654" y="242.01" width="10.3" height="12.97" fill="#e4fa14"/>
<rect x="654" y="254.68" width="10.3" height="12.97" fill="#c6f430"/>
<rect x="654" y="267.35" width="10.3" height="12.97" fill="#a6f250"/>
<rect x="654" y="280.02" width="10.3" height="12.97" fill="#84f270"/>
<rect x="654" y="292.68" width="10.3" height="12.97" fill="#62f088"/>
<rect x="654" y="305.35" width="10.3" height="12.97" fill="#42f0a4"/>
<rect x="654" y="318.02" width="10.3" height="12.97" fill="#22f0c0"/>
<rect x="654" y="330.69" width="10.3" height="12.97" fill="#08f4d8"/>
<rect x="654" y="343.36" width="10.3" height="12.97" fill="#00d8ea"/>
<rect x="654" y="356.02" width="10.3" height="12.97" fill="#00b8f2"/>
<rect x="654" y="368.69" width="10.3" height="12.97" fill="#0098f8"/>
<rect x="654" y="381.36" width="10.3" height="12.97" fill="#0072ff"/>
<rect x="654" y="394.03" width="10.3" height="12.97" fill="#0052ff"/>
<rect x="654" y="406.70" width="10.3" height="12.97" fill="#0034ff"/>
<rect x="654" y="419.36" width="10.3" height="12.97" fill="#0018ff"/>
<rect x="654" y="432.03" width="10.3" height="12.97" fill="#0000ff"/>
</g>
</svg>
<div class="title">TPS vs. RPM</div>
<div class="cy" style="right:754.5px;top:43.5px">100.3</div>
<div class="cy" style="right:754.5px;top:156px">75.18</div>
<div class="cy" style="right:754.5px;top:274px">50.05</div>
<div class="cy" style="right:754.5px;top:391.5px">24.93</div>
<div class="cy" style="right:754.5px;top:506px">-0.200</div>
<div class="cx" style="left:22px;top:515.0px">0</div>
<div class="cx" style="left:162.5px;top:515.0px">2015</div>
<div class="cx" style="left:304px;top:515.0px">4041</div>
<div class="cx" style="left:449px;top:515.0px">6068</div>
<div class="cx" style="left:581.5px;top:515.0px">8094</div>
<div class="cy" style="right:148.5px;top:130.6px">102.7</div>
<div class="cy" style="right:148.5px;top:143.28px">99.26</div>
<div class="cy" style="right:148.5px;top:155.95999999999998px">95.82</div>
<div class="cy" style="right:148.5px;top:168.64px">92.37</div>
<div class="cy" style="right:148.5px;top:181.32px">88.93</div>
<div class="cy" style="right:148.5px;top:194.0px">85.49</div>
<div class="cy" style="right:148.5px;top:206.68px">82.05</div>
<div class="cy" style="right:148.5px;top:219.35999999999999px">78.61</div>
<div class="cy" style="right:148.5px;top:232.04px">75.17</div>
<div class="cy" style="right:148.5px;top:244.72px">71.72</div>
<div class="cy" style="right:148.5px;top:257.4px">68.28</div>
<div class="cy" style="right:148.5px;top:270.08px">64.84</div>
<div class="cy" style="right:148.5px;top:282.76px">61.40</div>
<div class="cy" style="right:148.5px;top:295.44px">57.96</div>
<div class="cy" style="right:148.5px;top:308.12px">54.52</div>
<div class="cy" style="right:148.5px;top:320.79999999999995px">51.07</div>
<div class="cy" style="right:148.5px;top:333.48px">47.63</div>
<div class="cy" style="right:148.5px;top:346.15999999999997px">44.19</div>
<div class="cy" style="right:148.5px;top:358.84000000000003px">40.75</div>
<div class="cy" style="right:148.5px;top:371.52px">37.31</div>
<div class="cy" style="right:148.5px;top:384.2px">33.87</div>
<div class="cy" style="right:148.5px;top:396.88px">30.42</div>
<div class="cy" style="right:148.5px;top:409.55999999999995px">26.98</div>
<div class="cy" style="right:148.5px;top:422.24px">23.54</div>
<div class="cy" style="right:148.5px;top:434.91999999999996px">20.10</div>
<div class="info" style="left:131px;top:44.5px;width:50px;text-align:right">RPM :</div>
<div class="info" style="left:184px;top:44.5px">190.7</div>
<div class="info" style="left:131px;top:54.2px;width:50px;text-align:right">TPS :</div>
<div class="info" style="left:184px;top:54.2px">61.58</div>
<div class="info" style="left:131px;top:63.8px;width:50px;text-align:right">Hits :</div>
<div class="info" style="left:184px;top:63.8px">0</div>
<div class="axl" style="left:2px;top:265px;width:8px;text-align:center">T</div>
<div class="axl" style="left:2px;top:276px;width:8px;text-align:center">P</div>
<div class="axl" style="left:2px;top:287.5px;width:8px;text-align:center">S</div>
<div class="axl" style="left:304px;top:536px;width:60px;text-align:center">RPM</div>
<div id="panel"></div><div class="hl"></div><div class="hl2"></div>
<div class="pencil"><svg width="14" height="13" viewBox="0 0 14 13" style="position:absolute;left:-1px;top:-1px"><line x1="4.4" y1="10.2" x2="10" y2="4.2" stroke="#efb727" stroke-width="4.2" stroke-linecap="butt"/><line x1="9.6" y1="1.6" x2="12.2" y2="3.8" stroke="#c41a1a" stroke-width="2.3" stroke-linecap="round"/><polygon points="2.2,9.8 5.4,12 3.6,12.8 2.4,12.4" fill="#f4dfb0"/><circle cx="2.8" cy="12.3" r="0.9" fill="#303030"/></svg></div>
<div class="closeb"><svg width="10" height="10" viewBox="0 0 10 10" style="position:absolute;left:0;top:0"><path d="M2 2 L8 8 M8 2 L2 8" stroke="#404040" stroke-width="2.6" stroke-linecap="round"/></svg></div>
<div class="gb"></div>
<div class="gbt">Data Filters</div>
<div id="tbl"></div>
<div class="hdiv"></div><div class="hdiv" style="left:797px"></div><div class="hbl"></div>
<div class="hdr" style="left:679px;top:41.7px">On</div>
<div class="hdr" style="left:701px;top:42px">Filter Name</div>
<div class="ball" style="top:57px"></div><div class="rt" style="top:57.5px">RPM Change</div><div class="rl" style="top:67px"></div>
<div class="ball" style="top:68px"></div><div class="rt" style="top:68.5px">Cold</div><div class="rl" style="top:78px"></div>
<div class="ball" style="top:79px"></div><div class="rt" style="top:79.5px">MAP 90</div><div class="rl" style="top:89px"></div>
<div class="ball red" style="top:90px"></div><div class="rt" style="top:90.5px">WOT</div><div class="rl" style="top:100px"></div>
<div class="ball" style="top:101px"></div><div class="rt" style="top:101.5px">MAP90bis100</div><div class="rl" style="top:111px"></div>
<div class="ball" style="top:112px"></div><div class="rt" style="top:112.5px">Idle Range</div><div class="rl" style="top:122px"></div>
<div class="ball" style="top:123px"></div><div class="rt" style="top:123.5px">Transients</div><div class="rl" style="top:133px"></div>
<div class="ball" style="top:134px"></div><div class="rt" style="top:134.5px">AFR Out of range</div><div class="rl" style="top:144px"></div>
<div class="ball" style="top:145px"></div><div class="rt" style="top:145.5px">AFR weicht ab</div><div class="rl" style="top:155px"></div>
<div class="ball" style="top:156px"></div><div class="rt" style="top:156.5px">AFR ist Target</div><div class="rl" style="top:166px"></div>
<div class="ball" style="top:167px"></div><div class="rt" style="top:167.5px">Egocor gr 10prozent</div><div class="rl" style="top:177px"></div>
<div class="ball" style="top:178px"></div><div class="rt" style="top:178.5px">Egocor kl 10prozent</div><div class="rl" style="top:188px"></div>
<div class="ball" style="top:189px"></div><div class="rt" style="top:189.5px">egocor100</div><div class="rl" style="top:199px"></div>
<div class="vdiv"></div>
<div class="rdiv"></div>
</body></html>
